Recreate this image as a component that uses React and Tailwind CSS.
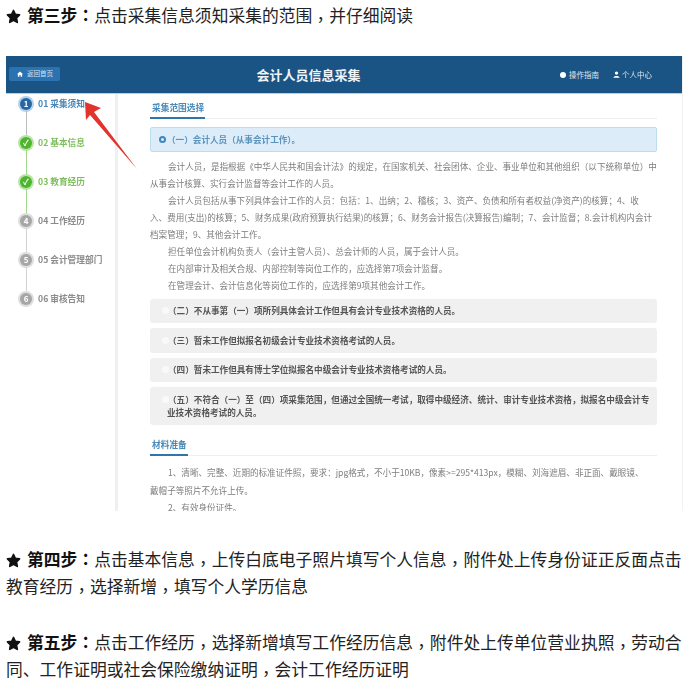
import React from "react";

const Star = () => (
  <svg width="15" height="15" viewBox="0 0 14 14" className="inline-block align-[-2px] mr-[6px]">
    <path
      d="M7 1.4 L8.7 5 L12.6 5.5 L9.8 8.2 L10.5 12.4 L7 10.4 L3.5 12.4 L4.2 8.2 L1.4 5.5 L5.3 5 Z"
      fill="#111"
      stroke="#111"
      strokeWidth="1.6"
      strokeLinejoin="round"
    />
  </svg>
);

// commas and colons sit in the middle of their cell in the picture
const Line = ({ text }) =>
  text.split(/([，：])/).map((part, i) => {
    if (part === "，") {
      return (
        <span key={i} className="font-['Noto_Sans_CJK_TC',sans-serif] leading-none align-[-4px]">
          {part}
        </span>
      );
    }
    if (part === "：") {
      return (
        <span key={i} className="font-['Noto_Sans_CJK_TC',sans-serif]">
          {part}
        </span>
      );
    }
    return <span key={i}>{part}</span>;
  });

const Step = ({ label, lines }) => (
  <p className="h-auto text-[16.8px] leading-[27px] text-[#222] whitespace-nowrap">
    <Star />
    <b className="font-bold text-[#111]">
      <Line text={label} />
    </b>
    {lines.map((l, i) => (
      <React.Fragment key={i}>
        {i > 0 && <br />}
        <Line text={l} />
      </React.Fragment>
    ))}
  </p>
);

const steps = [
  { n: "1", label: "01 采集须知", kind: "active" },
  { n: "✓", label: "02 基本信息", kind: "done" },
  { n: "✓", label: "03 教育经历", kind: "done" },
  { n: "4", label: "04 工作经历", kind: "todo" },
  { n: "5", label: "05 会计管理部门", kind: "todo" },
  { n: "6", label: "06 审核告知", kind: "todo" },
];

const circleClass = {
  active: "bg-[#2668a6] ring-[#b5d2ea]",
  done: "bg-[#4fb52f] ring-[#b9e4a8]",
  todo: "bg-[#a6a6a6] ring-[#dedede]",
};
const lineClass = { active: "bg-[#bcbcbc]", done: "bg-[#a5d68f]", todo: "bg-[#d2d2d2]" };
const textClass = { active: "text-[#4a86b5]", done: "text-[#7cbf5a]", todo: "text-[#8b8b8b]" };

const SectionTitle = ({ children, w }) => (
  <div className="h-[20px] border-b border-[#eeeeee] flex">
    <div className={`${w} h-[20px] border-b-2 border-[#2f74aa] pl-[2px] text-[8.7px] leading-[18px] font-bold text-[#4a8bb8]`}>
      {children}
    </div>
  </div>
);

const Option = ({ children }) => (
  <div className="bg-[#f0f0f0] rounded-[3px] pl-[17px] pr-[4px] py-[5.5px] text-[8.6px] leading-[13.5px] font-bold text-[#555]">
    <span className="inline-block w-[7px] h-[7px] ml-[-5px] mr-[-1px] rounded-full bg-[#f9f9f9]" />
    {children}
  </div>
);

export default function App() {
  return (
    <div className="w-[690px] h-[683px] overflow-hidden bg-white font-['Noto_Sans_CJK_SC',sans-serif]">
      <div className="pl-[6px] pt-[2px]">
        <Step label="第三步：" lines={["点击采集信息须知采集的范围，并仔细阅读"]} />
      </div>

      {/* embedded screenshot */}
      <div className="relative mt-[27px] ml-[6px] w-[677px] h-[455px] overflow-hidden blur-[0.6px] border-r border-[#f2f2f2]">
        <div className="h-[37px] bg-[#1a5484] flex items-center pl-[3px] pr-[28px]">
          <div className="w-[51px] h-[14px] mt-[-1px] bg-[#2b72b0] rounded-[2px] flex items-center gap-[4px] pl-[8px] text-[6.5px] text-[#d4e4f2]">
            <svg width="6" height="6" viewBox="0 0 10 10">
              <path d="M5 1 L10 5.5 H8.5 V9.5 H6 V6.5 H4 V9.5 H1.5 V5.5 H0 Z" fill="#fff" />
            </svg>
            返回首页
          </div>
          <div className="flex-1 text-center text-[13px] font-bold text-[#eef3f7] mt-[1px] pr-[3px]">会计人员信息采集</div>
          <div className="w-[94px] shrink-0 whitespace-nowrap flex items-center text-[7.5px] text-[#dfe9f2]">
            <span className="w-[6px] h-[6px] rounded-full bg-white mr-[3px]" />
            操作指南
            <svg width="7" height="7" viewBox="0 0 10 10" className="ml-[14px] mr-[2px]">
              <circle cx="5" cy="3" r="2.4" fill="#fff" />
              <path d="M0.5 9.5 C1 6.5 9 6.5 9.5 9.5 Z" fill="#fff" />
            </svg>
            个人中心
          </div>
        </div>

        <div className="flex h-[418px] border-t border-[#b9cfe0]">
          {/* steps */}
          <div className="w-[112px] shrink-0 border-r-[3px] border-[#f0f0f0] pl-[13px] pt-[3px]">
            {steps.map((s, i) => (
              <div key={s.n + i} className="flex h-[39px] gap-[5px]">
                <div className="w-[14px] flex flex-col items-center">
                  <span
                    className={`w-[12px] h-[12px] mt-[1px] rounded-full ring-2 flex items-center justify-center text-[8px] font-bold text-white ${circleClass[s.kind]}`}
                  >
                    {s.n}
                  </span>
                  {i < 5 && <span className={`w-px flex-1 mt-[1px] ${lineClass[s.kind]}`} />}
                </div>
                <div className={`text-[8.7px] leading-[14px] font-semibold whitespace-nowrap ${textClass[s.kind]}`}>{s.label}</div>
              </div>
            ))}
          </div>

          {/* content */}
          <div className="w-[539px] pl-[32px] pt-[5px] text-[8.58px] text-[#7d7d7d]">
            <SectionTitle w="w-[55px]">采集范围选择</SectionTitle>
            <div className="mt-[8px] h-[25px] bg-[#dcecf9] border border-[#bcdcf0] rounded-[2px] flex items-center pl-[8px] text-[8.6px] font-bold text-[#5b93bf]">
              <span className="w-[7px] h-[7px] rounded-full border-2 border-[#3f86bd] mr-[1px]" />
              （一）会计人员（从事会计工作）。
            </div>
            <div className="mt-[6px] leading-[17px] whitespace-nowrap">
              <p className="pl-[18px]">会计人员，是指根据《中华人民共和国会计法》的规定，在国家机关、社会团体、企业、事业单位和其他组织（以下统称单位）中</p>
              <p>从事会计核算、实行会计监督等会计工作的人员。</p>
              <p className="pl-[18px]">会计人员包括从事下列具体会计工作的人员：包括：1、出纳；2、稽核；3、资产、负债和所有者权益(净资产)的核算；4、收</p>
              <p>入、费用(支出)的核算；5、财务成果(政府预算执行结果)的核算；6、财务会计报告(决算报告)编制；7、会计监督；8.会计机构内会计</p>
              <p>档案管理；9、其他会计工作。</p>
              <p className="pl-[18px]">担任单位会计机构负责人（会计主管人员）、总会计师的人员，属于会计人员。</p>
              <p className="pl-[18px]">在内部审计及相关合规、内部控制等岗位工作的，应选择第7项会计监督。</p>
              <p className="pl-[18px]">在管理会计、会计信息化等岗位工作的，应选择第9项其他会计工作。</p>
            </div>
            <div className="mt-[4.5px] flex flex-col gap-[5px]">
              <Option>（二）不从事第（一）项所列具体会计工作但具有会计专业技术资格的人员。</Option>
              <Option>（三）暂未工作但拟报名初级会计专业技术资格考试的人员。</Option>
              <Option>（四）暂未工作但具有博士学位拟报名中级会计专业技术资格考试的人员。</Option>
              <Option>
                （五）不符合（一）至（四）项采集范围，但通过全国统一考试，取得中级经济、统计、审计专业技术资格，拟报名中级会计专业技术资格考试的人员。
              </Option>
            </div>
            <div className="mt-[11px]">
              <SectionTitle w="w-[38px]">材料准备</SectionTitle>
            </div>
            <div className="mt-[8px] leading-[17.5px] whitespace-nowrap">
              <p className="pl-[18px]">1、清晰、完整、近期的标准证件照，要求：jpg格式，不小于10KB，像素&gt;=295*413px，模糊、刘海遮眉、非正面、戴眼镜、</p>
              <p>戴帽子等照片不允许上传。</p>
              <p className="pl-[18px]">2、有效身份证件。</p>
            </div>
          </div>
        </div>

        {/* red arrow over the first step */}
        <svg width="677" height="455" viewBox="0 0 677 455" className="absolute left-0 top-0 pointer-events-none">
          <path d="M79 46 L95 52 L88 56 L131 113 L84 59 L80 64 Z" fill="#e2332d" />
        </svg>
      </div>

      <div className="pl-[6px] mt-[35px]">
        <Step
          label="第四步："
          lines={["点击基本信息，上传白底电子照片填写个人信息，附件处上传身份证正反面点击", "教育经历，选择新增，填写个人学历信息"]}
        />
      </div>
      <div className="pl-[6px] mt-[29px]">
        <Step
          label="第五步："
          lines={["点击工作经历，选择新增填写工作经历信息，附件处上传单位营业执照，劳动合", "同、工作证明或社会保险缴纳证明，会计工作经历证明"]}
        />
      </div>
    </div>
  );
}
